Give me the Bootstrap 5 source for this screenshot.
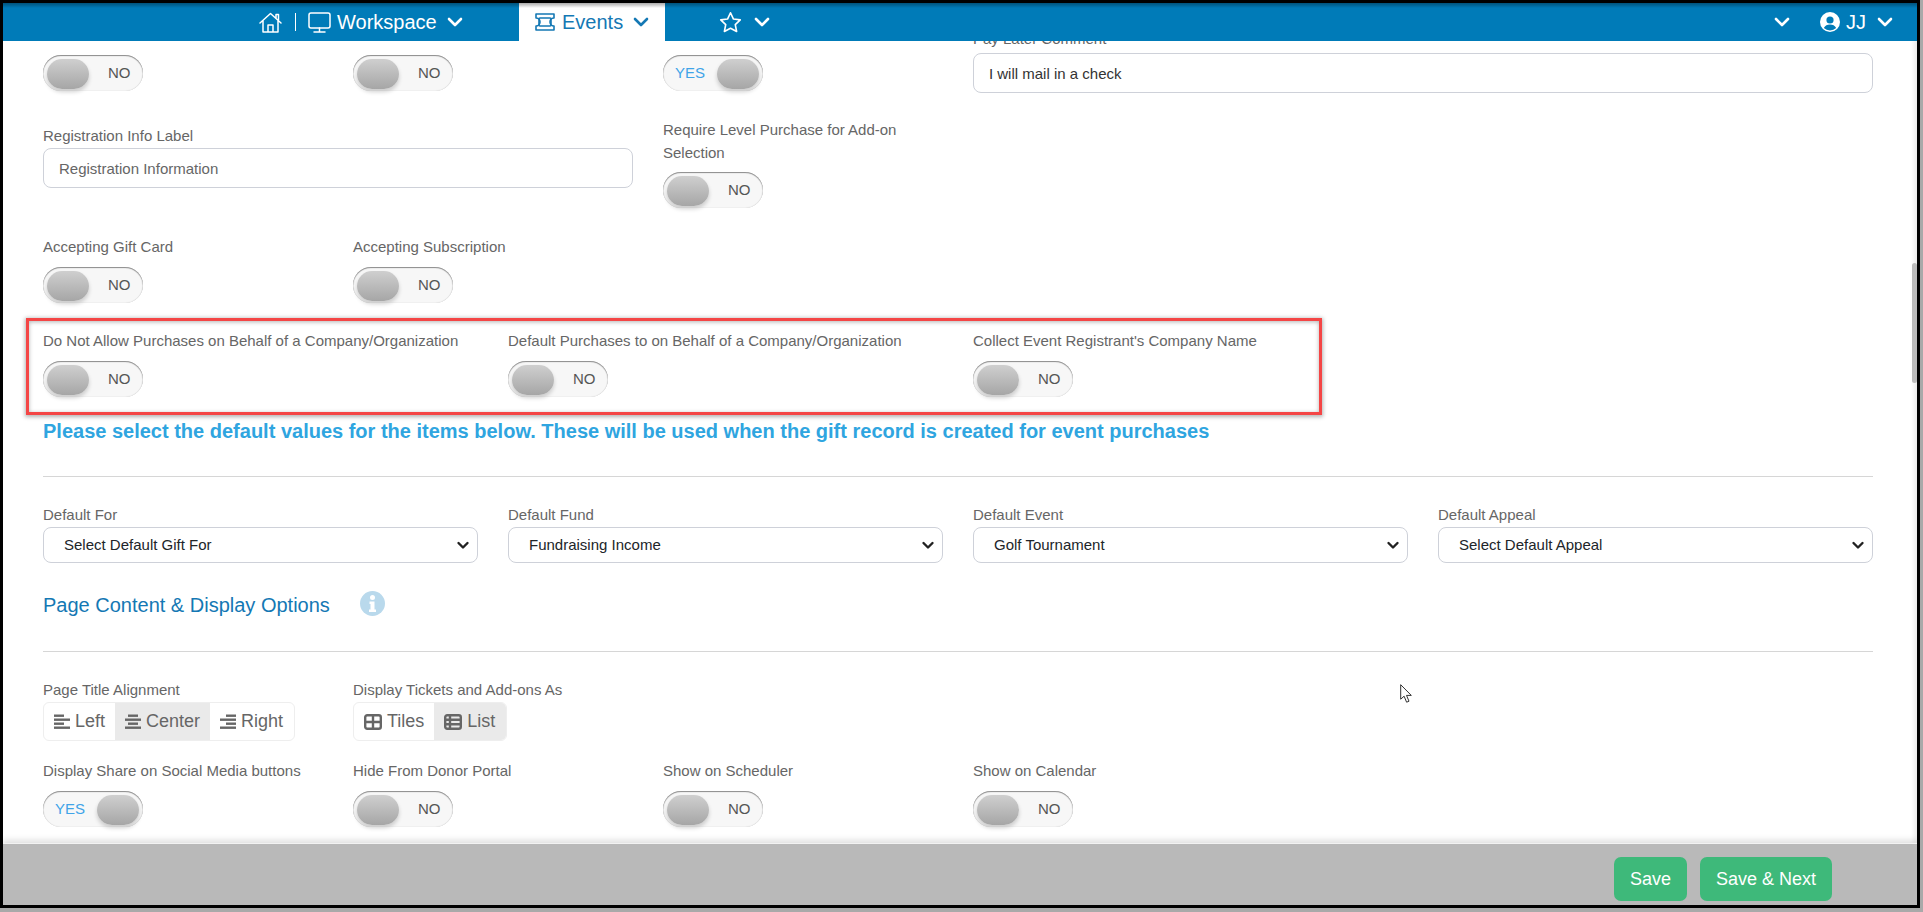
<!DOCTYPE html>
<html lang="en">
<head>
<meta charset="utf-8">
<title>Event settings</title>
<link rel="stylesheet" href="https://cdn.jsdelivr.net/npm/bootstrap@5.3.0/dist/css/bootstrap.min.css">
<style>
html,body{height:100%;overflow:hidden;background:#a9a9a9;}
body{font-family:"Liberation Sans",Arial,sans-serif;font-size:15px;color:#666;}
.shot-frame{width:1920px;height:908px;border:3px solid #000;background:#fff;position:relative;overflow:hidden;display:flex;flex-direction:column;}
.top-bar{height:38px;flex:none;background:#007bb8;color:#fff;font-size:20px;position:relative;z-index:3;}
.top-bar::before{content:"";position:absolute;left:0;right:0;top:0;height:5px;background:linear-gradient(#00000055,#00000000);z-index:4;pointer-events:none;}
.nav-home{margin-left:256px;width:260px;}
.nav-events{width:146px;height:38px;background:#fff;color:#1478b4;padding-left:14px;}
.nav-fav{margin-left:54px;}
.nav-right{margin-left:auto;margin-right:24px;}
.sep{width:1px;height:18px;background:#fff;margin:0 12px 0 13px;}
.gap-wk{margin-left:6px;}
.gap-ch{margin-left:10px;}
.gap-ev{margin-left:5px;}
.user-ic{margin-left:30px;}
.gap-jj{margin-left:6px;}
.gap-ch2{margin-left:11px;}
.scroll-area{flex:1;min-height:0;overflow:hidden;position:relative;padding:0 44px 0 40px;}
.scroll-area::after{content:"";position:absolute;top:0;right:0;bottom:0;width:6px;background:linear-gradient(90deg,#ffffff00,#00000014);}
.sb-thumb{position:absolute;right:0;top:222px;width:5px;height:120px;background:#bbb;border-radius:3px;z-index:2;}
.form-row{--bs-gutter-x:30px;--bs-gutter-y:0;}
.fld-label{display:block;font-size:15px;line-height:23px;color:#666;margin:0;min-height:23px;}
.tog{width:100px;height:36px;border-radius:18px;background:#f7f7f7;position:relative;display:flex;align-items:center;box-shadow:inset 0 1px 1px #8a8a8a,inset 0 0 1px #bbb;font-size:15px;}
.tog-thumb{width:42px;height:30px;border-radius:15px;background:linear-gradient(#cfcfcf,#a6a6a6);position:absolute;top:4px;left:4px;box-shadow:0 3px 4px #0000002e;}
.tog-txt{position:absolute;left:65px;color:#555;}
.tog-yes .tog-thumb{left:54px;}
.tog-yes .tog-txt{left:12px;color:#3fa4e8;}
.tog-gap{margin-top:9px;}
.txt-input{height:40px;border:1px solid #ced1d9;border-radius:8px;font-size:15px;color:#333;padding:0 15px;box-shadow:none;}
.txt-input.dim{color:#666;}
.txt-input:focus{box-shadow:none;border-color:#ced1d9;}
.sel-input{height:36px;margin-top:1px;border:1px solid #ced1d9;border-radius:8px;font-size:15px;color:#212529;padding:0 30px 0 20px;box-shadow:none;background-position:right 7px center;background-size:14px 12px;background-image:url("data:image/svg+xml,%3csvg xmlns='http://www.w3.org/2000/svg' viewBox='0 0 14 12'%3e%3cpath fill='none' stroke='%23222' stroke-width='2.4' stroke-linecap='round' stroke-linejoin='round' d='M2.500 4l4.500 4.500L11.500 4'/%3e%3c/svg%3e");}
.mark-box{position:absolute;left:23px;top:277px;width:1296px;height:97px;border:3px solid #f44545;box-shadow:0 1px 4px 1px #0000004d,inset 0 1px 4px #0000004d;pointer-events:none;}
.notice{font-size:20px;font-weight:700;color:#2fa5e0;line-height:24px;margin:22px 0 0;white-space:nowrap;}
.rule{height:1px;background:#d6d6d6;border:0;opacity:1;margin:33px 0 0;}
.sect-title{font-size:20px;color:#1478b4;line-height:26px;}
.info-dot{margin-left:30px;margin-top:-4px;flex:none;}
.sect-line{margin-top:29px;}
.seg{height:39px;margin-top:1px;border:1px solid #eee;border-radius:6px;display:inline-flex;font-size:18px;color:#666;overflow:hidden;}
.seg-item{display:flex;align-items:center;gap:5px;padding:0 10px;height:100%;}
.seg-item:last-child{padding-right:11px;}
.seg-on{background:#eaeaea;}
.row-a{margin-top:-14px;}
.fld-a{margin-top:3px;}
.tog-a{margin-top:5px;}
.row-b{margin-top:25px;}
.lbl-b{margin-top:6px;}
.inp-b{margin-top:1px;}
.tog-b{margin-top:8px;}
.row-c{margin-top:27px;}
.row-d{margin-top:26px;}
.row-e{margin-top:26px;}
.row-f{margin-top:26px;}
.row-g{margin-top:18px;}
.foot-bar{flex:none;height:62px;background:#b9b9b9;border-top:1px solid #f2f2f2;box-shadow:0 -3px 6px #00000020;position:relative;z-index:3;padding-right:85px;padding-top:13px;gap:13px;}
.save-btn{background:#3eb97a;border:0;color:#fff;border-radius:7px;height:44px;font-size:18px;padding:0 16px;line-height:44px;}
.save-btn:hover{background:#3eb97a;color:#fff;}
.cursor-mark{position:absolute;left:1397px;top:643px;z-index:2;}
</style>
</head>
<body>
<div class="shot-frame">
  <nav class="top-bar d-flex align-items-center">
    <div class="nav-home d-flex align-items-center">
      <svg width="23" height="21" viewBox="0 0 23 21" fill="none" stroke="#fff" stroke-width="1.5" stroke-linejoin="round" stroke-linecap="round"><path d="M1 11 11.500 1.500 22 11M4 9v11h15V9M9 20v-7h5v7M17 6V2.500h2.500V8"/></svg>
      <span class="sep"></span>
      <svg width="23" height="21" viewBox="0 0 23 21" fill="none" stroke="#fff" stroke-width="1.5" stroke-linejoin="round" stroke-linecap="round"><rect x="1" y="1" width="21" height="15" rx="2"/><path d="M11.500 16v4M6 20h11"/></svg>
      <span class="gap-wk">Workspace</span>
      <svg class="gap-ch" width="16" height="11" viewBox="0 0 16 11" fill="none" stroke="#fff" stroke-width="2.6" stroke-linecap="round" stroke-linejoin="round"><path d="M2 2l6 6 6-6"/></svg>
    </div>
    <div class="nav-events d-flex align-items-center">
      <svg width="24" height="18" viewBox="0 0 24 18" fill="none" stroke="#1478b4" stroke-width="1.6" stroke-linejoin="round"><path d="M3 1h18v4a3 3 0 0 0 0 8v4H3v-4a3 3 0 0 0 0-8z"/><rect x="6" y="5" width="12" height="8" rx="1"/></svg>
      <span class="gap-ev">Events</span>
      <svg class="gap-ch" width="16" height="11" viewBox="0 0 16 11" fill="none" stroke="#1478b4" stroke-width="2.6" stroke-linecap="round" stroke-linejoin="round"><path d="M2 2l6 6 6-6"/></svg>
    </div>
    <div class="nav-fav d-flex align-items-center gap-2">
      <svg width="23" height="22" viewBox="0 0 24 23" fill="none" stroke="#fff" stroke-width="1.7" stroke-linejoin="round"><path d="M12 1.800l3.100 6.600 7.100.9-5.200 5 1.400 7.100L12 18l-6.400 3.400L7 14.300l-5.200-5 7.100-.9z"/></svg>
      <svg class="ms-1" width="16" height="11" viewBox="0 0 16 11" fill="none" stroke="#fff" stroke-width="2.6" stroke-linecap="round" stroke-linejoin="round"><path d="M2 2l6 6 6-6"/></svg>
    </div>
    <div class="nav-right d-flex align-items-center">
      <svg width="16" height="11" viewBox="0 0 16 11" fill="none" stroke="#fff" stroke-width="2.6" stroke-linecap="round" stroke-linejoin="round"><path d="M2 2l6 6 6-6"/></svg>
      <svg class="user-ic" width="20" height="20" viewBox="0 0 20 20"><circle cx="10" cy="10" r="10" fill="#fff"/><circle cx="10" cy="8" r="3.600" fill="#007bb8"/><path d="M3.800 16c1.300-2.600 3.400-3.600 6.200-3.600s4.900 1 6.200 3.600a9 9 0 0 1-12.400 0z" fill="#007bb8"/></svg>
      <span class="gap-jj">JJ</span>
      <svg class="gap-ch2" width="16" height="11" viewBox="0 0 16 11" fill="none" stroke="#fff" stroke-width="2.6" stroke-linecap="round" stroke-linejoin="round"><path d="M2 2l6 6 6-6"/></svg>
    </div>
  </nav>

  <main class="scroll-area">
    <div class="sb-thumb"></div>
    <svg class="cursor-mark" width="13" height="19" viewBox="0 0 13 19" fill="#fff" stroke="#333" stroke-width="1"><path d="M.7.7v14.500l3.400-3 2.500 6 2.400-1-2.500-5.800h4.800z"/></svg>

    <div class="row form-row row-a">
      <div class="col-2"><span class="fld-label"></span><div class="tog tog-a"><span class="tog-thumb"></span><span class="tog-txt">NO</span></div></div>
      <div class="col-2"><span class="fld-label"></span><div class="tog tog-a"><span class="tog-thumb"></span><span class="tog-txt">NO</span></div></div>
      <div class="col-2"><span class="fld-label"></span><div class="tog tog-yes tog-a"><span class="tog-txt">YES</span><span class="tog-thumb"></span></div></div>
      <div class="col-6"><label class="fld-label">Pay Later Comment</label><input class="form-control txt-input fld-a" value="I will mail in a check"></div>
    </div>

    <div class="row form-row row-b">
      <div class="col-4">
        <label class="fld-label lbl-b">Registration Info Label</label>
        <input class="form-control txt-input dim inp-b" value="Registration Information">
      </div>
      <div class="col-2">
        <label class="fld-label">Require Level Purchase for Add-on Selection</label>
        <div class="tog tog-b"><span class="tog-thumb"></span><span class="tog-txt">NO</span></div>
      </div>
    </div>

    <div class="row form-row row-c">
      <div class="col-2"><label class="fld-label">Accepting Gift Card</label><div class="tog tog-gap"><span class="tog-thumb"></span><span class="tog-txt">NO</span></div></div>
      <div class="col-2"><label class="fld-label">Accepting Subscription</label><div class="tog tog-gap"><span class="tog-thumb"></span><span class="tog-txt">NO</span></div></div>
    </div>

    <div class="row form-row row-d">
      <div class="col-3"><label class="fld-label text-nowrap">Do Not Allow Purchases on Behalf of a Company/Organization</label><div class="tog tog-gap"><span class="tog-thumb"></span><span class="tog-txt">NO</span></div></div>
      <div class="col-3"><label class="fld-label text-nowrap">Default Purchases to on Behalf of a Company/Organization</label><div class="tog tog-gap"><span class="tog-thumb"></span><span class="tog-txt">NO</span></div></div>
      <div class="col-3"><label class="fld-label text-nowrap">Collect Event Registrant's Company Name</label><div class="tog tog-gap"><span class="tog-thumb"></span><span class="tog-txt">NO</span></div></div>
    </div>
    <div class="mark-box"></div>

    <p class="notice">Please select the default values for the items below. These will be used when the gift record is created for event purchases</p>
    <hr class="rule">

    <div class="row form-row row-e">
      <div class="col-3"><label class="fld-label">Default For</label><select class="form-select sel-input"><option>Select Default Gift For</option></select></div>
      <div class="col-3"><label class="fld-label">Default Fund</label><select class="form-select sel-input"><option>Fundraising Income</option></select></div>
      <div class="col-3"><label class="fld-label">Default Event</label><select class="form-select sel-input"><option>Golf Tournament</option></select></div>
      <div class="col-3"><label class="fld-label">Default Appeal</label><select class="form-select sel-input"><option>Select Default Appeal</option></select></div>
    </div>

    <div class="d-flex align-items-center sect-line">
      <span class="sect-title">Page Content &amp; Display Options</span>
      <svg class="info-dot" width="25" height="25" viewBox="0 0 25 25"><circle cx="12.500" cy="12.500" r="12.500" fill="#b9d9ec"/><circle cx="12.500" cy="6.500" r="2.500" fill="#fff"/><path d="M9.500 10.500h5v8h1.500v2.500H9v-2.500h1.500v-5.500h-1z" fill="#fff"/></svg>
    </div>
    <hr class="rule">

    <div class="row form-row row-f">
      <div class="col-2">
        <label class="fld-label">Page Title Alignment</label>
        <div class="seg">
          <div class="seg-item"><svg width="16" height="16" viewBox="0 0 16 16" fill="#666"><rect x="0" y="0.500" width="10" height="2.400"/><rect x="0" y="4.500" width="16" height="2.400"/><rect x="0" y="8.500" width="10" height="2.400"/><rect x="0" y="12.500" width="16" height="2.400"/></svg>Left</div>
          <div class="seg-item seg-on"><svg width="16" height="16" viewBox="0 0 16 16" fill="#666"><rect x="3" y="0.500" width="10" height="2.400"/><rect x="0" y="4.500" width="16" height="2.400"/><rect x="3" y="8.500" width="10" height="2.400"/><rect x="0" y="12.500" width="16" height="2.400"/></svg>Center</div>
          <div class="seg-item"><svg width="16" height="16" viewBox="0 0 16 16" fill="#666"><rect x="6" y="0.500" width="10" height="2.400"/><rect x="0" y="4.500" width="16" height="2.400"/><rect x="6" y="8.500" width="10" height="2.400"/><rect x="0" y="12.500" width="16" height="2.400"/></svg>Right</div>
        </div>
      </div>
      <div class="col-2">
        <label class="fld-label text-nowrap">Display Tickets and Add-ons As</label>
        <div class="seg">
          <div class="seg-item"><svg width="18" height="16" viewBox="0 0 18 16" fill="none" stroke="#666" stroke-width="2.400"><rect x="1.200" y="1.200" width="15.600" height="13.600" rx="2"/><path d="M1 8h16M9 1v14"/></svg>Tiles</div>
          <div class="seg-item seg-on"><svg width="18" height="16" viewBox="0 0 18 16" fill="none" stroke="#666" stroke-width="2.400"><rect x="1.200" y="1.200" width="15.600" height="13.600" rx="2"/><path d="M1 5.700h16M1 10.300h16M6 1v14"/></svg>List</div>
        </div>
      </div>
    </div>

    <div class="row form-row row-g">
      <div class="col-2"><label class="fld-label text-nowrap">Display Share on Social Media buttons</label><div class="tog tog-yes tog-gap"><span class="tog-txt">YES</span><span class="tog-thumb"></span></div></div>
      <div class="col-2"><label class="fld-label">Hide From Donor Portal</label><div class="tog tog-gap"><span class="tog-thumb"></span><span class="tog-txt">NO</span></div></div>
      <div class="col-2"><label class="fld-label">Show on Scheduler</label><div class="tog tog-gap"><span class="tog-thumb"></span><span class="tog-txt">NO</span></div></div>
      <div class="col-2"><label class="fld-label">Show on Calendar</label><div class="tog tog-gap"><span class="tog-thumb"></span><span class="tog-txt">NO</span></div></div>
    </div>
  </main>

  <footer class="foot-bar d-flex justify-content-end">
    <button class="btn save-btn">Save</button>
    <button class="btn save-btn">Save &amp; Next</button>
  </footer>
</div>
</body>
</html>
